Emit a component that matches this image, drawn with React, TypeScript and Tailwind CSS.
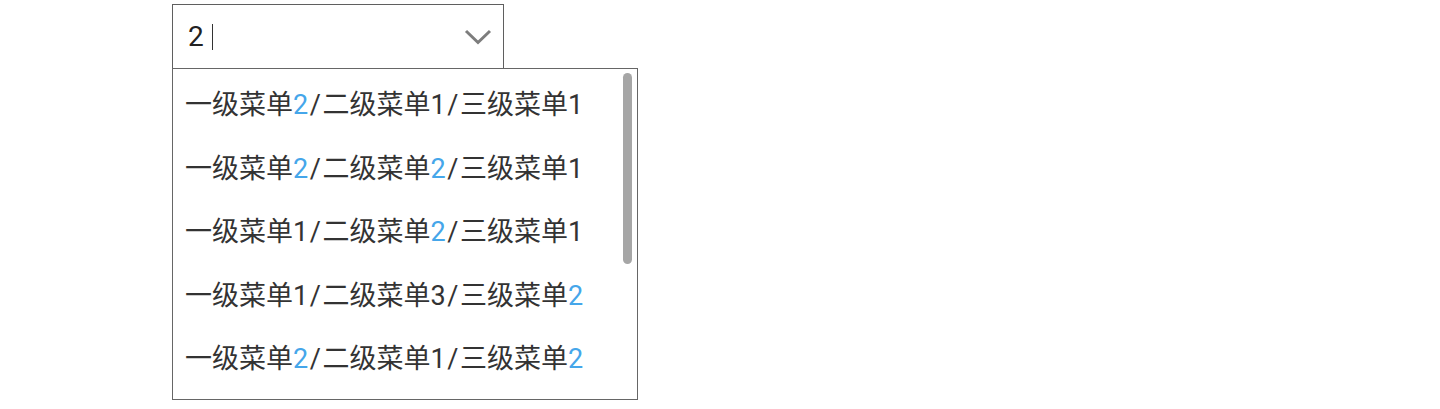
import React from "react";

const items: string[][] = [
  ["一级菜单", "2", "/", "二级菜单", "1", "/", "三级菜单", "1"],
  ["一级菜单", "2", "/", "二级菜单", "2", "/", "三级菜单", "1"],
  ["一级菜单", "1", "/", "二级菜单", "2", "/", "三级菜单", "1"],
  ["一级菜单", "1", "/", "二级菜单", "3", "/", "三级菜单", "2"],
  ["一级菜单", "2", "/", "二级菜单", "1", "/", "三级菜单", "2"],
];

function cls(p: string, j: number) {
  if (p === "2" && j !== 2 && j !== 5) return "text-[#45a6ea] tracking-[1.6px]";
  if (/^[0-9/]$/.test(p)) return "tracking-[1.6px]";
  return "";
}

export default function App() {
  return (
    <div
      className="w-[1440px] h-[409px] bg-white text-[#333333]"
      style={{ fontFamily: 'Roboto, "Noto Sans CJK SC", sans-serif' }}
    >
      <div className="pl-[172px] pt-[4px]">
        <div className="w-[332px] h-[65px] border border-[#5f5f5f] flex items-center pl-[15px] pr-[10px]">
          <span className="text-[28px] leading-none text-[#222222]">2</span>
          <span className="ml-[8px] w-px h-[26px] bg-[#333333]" />
          <div className="flex-1" />
          <svg width="28" height="16" viewBox="0 0 28 16" className="mr-[1px]">
            <path d="M2 2 L14 13.5 L26 2" fill="none" stroke="#7d7d7d" strokeWidth="3" />
          </svg>
        </div>
        <div className="relative -mt-px w-[466px] h-[332px] border border-[#666666] overflow-hidden">
          <div className="pt-[5px] pl-[12px]">
            {items.map((parts, i) => (
              <div key={i} className="h-[63.5px] flex items-center text-[27px] leading-none whitespace-nowrap">
                {parts.map((p, j) => (
                  <span key={j} className={cls(p, j)}>
                    {p}
                  </span>
                ))}
              </div>
            ))}
          </div>
          <div className="absolute right-[5px] top-[4px] w-[9px] h-[191px] rounded-full bg-[#a6a6a6]" />
        </div>
      </div>
    </div>
  );
}
